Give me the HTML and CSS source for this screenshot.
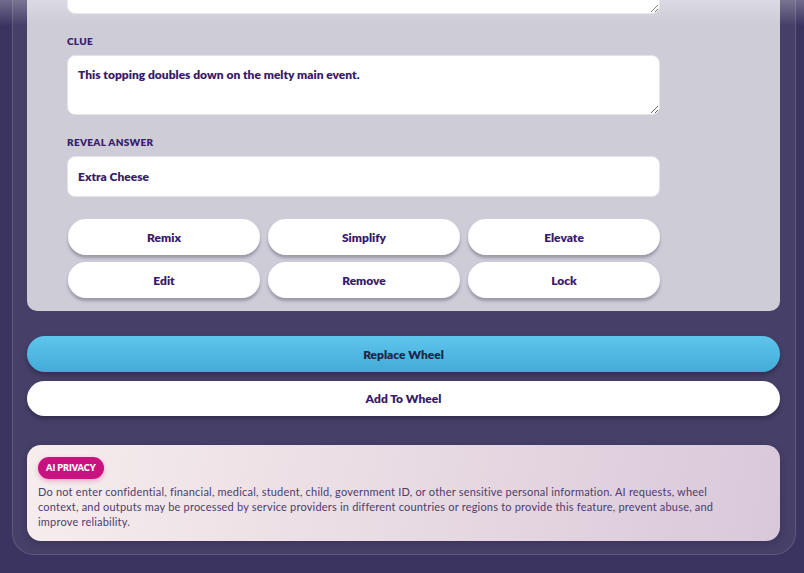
FILE: index.html
```html
<!DOCTYPE html>
<html lang="en">

<head>
    <meta charset="UTF-8">
    <meta name="viewport" content="width=device-width, initial-scale=1.0">
    <title>Wheel Builder - Clue Editor</title>
    <link rel="stylesheet" href="styles.css">
</head>

<body>
    <div class="top-fade"></div>

    <div class="panel">
        <div class="card">
            <div class="field">
                <label class="label" for="promptInput">Prompt</label>
                <textarea id="promptInput" class="textbox">What do you call the extra layer on top of a pizza?</textarea>
            </div>

            <div class="field">
                <label class="label" for="clueInput">Clue</label>
                <textarea id="clueInput" class="textbox">This topping doubles down on the melty main event.</textarea>
            </div>

            <div class="field">
                <label class="label" for="answerInput">Reveal Answer</label>
                <input type="text" id="answerInput" class="textbox single" value="Extra Cheese" />
            </div>

            <div class="actions">
                <button class="pill">Remix</button>
                <button class="pill">Simplify</button>
                <button class="pill">Elevate</button>
                <button class="pill">Edit</button>
                <button class="pill">Remove</button>
                <button class="pill">Lock</button>
            </div>
        </div>

        <button class="wide-btn primary">Replace Wheel</button>
        <button class="wide-btn">Add To Wheel</button>

        <div class="privacy">
            <span class="badge">AI Privacy</span>
            <p class="privacy-text">Do not enter confidential, financial, medical, student, child, government ID, or other sensitive personal information. AI requests, wheel context, and outputs may be processed by service providers in different countries or regions to provide this feature, prevent abuse, and improve reliability.</p>
        </div>
    </div>
</body>

</html>
```

FILE: styles.css
```css
body {
    margin: 0;
    font-family: Lato, "Noto Sans", sans-serif;
    background-color: #3b3461;
    height: 573px;
    overflow: hidden;
}

.top-fade {
    position: fixed;
    top: 0;
    left: 0;
    right: 0;
    height: 26px;
    background: linear-gradient(rgba(255, 255, 255, 0.28), rgba(255, 255, 255, 0));
    pointer-events: none;
    z-index: 5;
}

.panel {
    margin: -101px 0 0 12px;
    width: 784px;
    box-sizing: border-box;
    padding: 14px 15px 13px 14px;
    background-color: #463f68;
    border: 1px solid rgba(255, 255, 255, 0.14);
    border-radius: 22px;
    display: flex;
    flex-direction: column;
}

.card {
    background-color: #cdccd7;
    border-radius: 10px;
    padding: 20px 120px 13px 40px;
    display: flex;
    flex-direction: column;
    gap: 21px;
}

.field {
    display: flex;
    flex-direction: column;
    gap: 8px;
}

.label {
    font-size: 10px;
    line-height: 12px;
    font-weight: 800;
    letter-spacing: 0.3px;
    text-transform: uppercase;
    color: #3a1c6c;
}

.textbox {
    box-sizing: border-box;
    width: 100%;
    height: 60px;
    margin: 0;
    padding: 11px 10px;
    border: 1px solid #e4e3ea;
    border-radius: 8px;
    background-color: #fff;
    font-family: inherit;
    font-size: 12px;
    font-weight: 800;
    color: #3a1a6a;
    resize: vertical;
    outline: none;
}

.textbox.single {
    height: 41px;
    padding: 0 10px;
}

.actions {
    margin-top: 1px;
    display: grid;
    grid-template-columns: repeat(3, 1fr);
    gap: 7px 8px;
    padding-left: 1px;
}

.pill {
    height: 36px;
    border: none;
    border-radius: 18px;
    background-color: #fff;
    font-family: inherit;
    font-size: 12px;
    font-weight: 800;
    color: #3a1a6a;
    box-shadow: 0 3px 3px rgba(60, 55, 80, 0.35);
    cursor: pointer;
}

.wide-btn {
    height: 35px;
    margin-top: 9px;
    border: none;
    border-radius: 18px;
    background-color: #fff;
    font-family: inherit;
    font-size: 12px;
    font-weight: 800;
    color: #3a1a6a;
    box-shadow: 0 3px 4px rgba(20, 15, 40, 0.35);
    cursor: pointer;
}

.wide-btn.primary {
    height: 36px;
    margin-top: 25px;
    background: linear-gradient(#5ec5ec, #44abd9);
    color: #1f2546;
}

.privacy {
    margin-top: 29px;
    padding: 10px 36px 12px 11px;
    border-radius: 14px;
    background: linear-gradient(100deg, #f6eded, #e7d9e2 55%, #d9c8da);
    box-shadow: 0 2px 6px rgba(20, 15, 40, 0.25);
}

.badge {
    display: inline-block;
    height: 22px;
    line-height: 22px;
    padding: 0 8px;
    border-radius: 11px;
    background-color: #c9127f;
    color: #fff;
    font-size: 9px;
    font-weight: 800;
    text-transform: uppercase;
    box-shadow: 0 2px 5px rgba(201, 18, 127, 0.3);
}

.privacy-text {
    margin: 5px 0 0;
    font-size: 11px;
    line-height: 15px;
    letter-spacing: 0.2px;
    color: #4d3c6d;
}
```
